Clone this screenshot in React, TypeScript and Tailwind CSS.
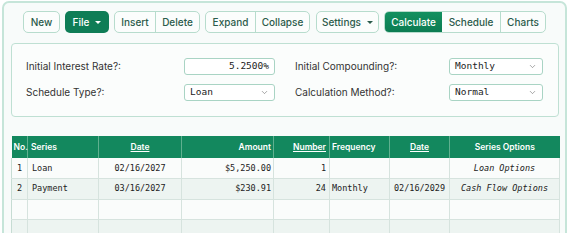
import { ChevronDown } from "lucide-react";

const sans = "font-['Inter','Noto_Sans',sans-serif]";
const mono = "font-['DejaVu_Sans_Mono','Liberation_Mono',monospace]";

const btn =
  "flex items-center justify-center h-full text-[10px] font-medium text-[#2b5b4b]";

function Caret({ light }: { light?: boolean }) {
  return (
    <span
      className={
        light
          ? "ml-[6px] inline-block border-x-[3px] border-x-transparent border-t-[3px] border-t-white"
          : "ml-[6px] inline-block border-x-[3px] border-x-transparent border-t-[3px] border-t-[#2b5b4b]"
      }
    />
  );
}

function Field({ value, right, select }: { value: string; right?: boolean; select?: boolean }) {
  return (
    <div
      className={`flex h-[17px] items-center rounded-[3px] border border-[#a9d4c4] bg-white px-[5px] ${mono} text-[9.5px] text-[#222] ${
        right ? "justify-end" : "justify-between"
      }`}
    >
      <span>{value}</span>
      {select && <ChevronDown className="h-[9px] w-[9px] text-[#666]" strokeWidth={1.5} />}
    </div>
  );
}

const rows = [
  { no: "1", series: "Loan", date: "02/16/2027", amount: "$5,250.00", number: "1", freq: "", date2: "", opt: "Loan Options" },
  { no: "2", series: "Payment", date: "03/16/2027", amount: "$230.91", number: "24", freq: "Monthly", date2: "02/16/2029", opt: "Cash Flow Options" },
  { no: "", series: "", date: "", amount: "", number: "", freq: "", date2: "", opt: "" },
  { no: "", series: "", date: "", amount: "", number: "", freq: "", date2: "", opt: "" },
];

const th = "h-[22px] border-l border-[#5fb08f] px-[2px] text-[8.5px] font-semibold text-white first:border-l-0";
const td = "h-[20.5px] border-l border-b border-[#d6e3de] px-[3px] text-[8.5px] text-[#222] first:border-l-[#c6dcd3]";

export default function App() {
  return (
    <div className={`h-[233px] w-[570px] overflow-hidden bg-white ${sans}`}>
      <div className="ml-[2px] mt-[1px] h-[270px] w-[565px] rounded-[7px] border-2 border-[#c6e5d9] bg-[#f8fbfa] pl-[7px] pt-[8px]">
        {/* Toolbar */}
        <div className="ml-[12px] flex h-[22px] gap-[5px]">
          <div className="h-full w-[37px] rounded-[5px] border border-[#b7dccd] bg-[#fbfdfc]">
            <div className={btn}>New</div>
          </div>
          <div className="h-full w-[44px] rounded-[5px] bg-[#0f7d56]">
            <div className={`${btn} text-white`}>
              File
              <Caret light />
            </div>
          </div>
          <div className="flex h-full overflow-hidden rounded-[5px] border border-[#b7dccd] bg-[#fbfdfc]">
            <div className={`${btn} w-[40px]`}>Insert</div>
            <div className={`${btn} w-[44px] border-l border-[#b7dccd]`}>Delete</div>
          </div>
          <div className="flex h-full overflow-hidden rounded-[5px] border border-[#b7dccd] bg-[#fbfdfc]">
            <div className={`${btn} w-[49px]`}>Expand</div>
            <div className={`${btn} w-[54px] border-l border-[#b7dccd]`}>Collapse</div>
          </div>
          <div className="ml-[1px] h-full w-[63px] rounded-[5px] border border-[#b7dccd] bg-[#fbfdfc]">
            <div className={btn}>
              Settings
              <Caret />
            </div>
          </div>
          <div className="flex h-full overflow-hidden rounded-[5px] border border-[#b7dccd] bg-[#fbfdfc]">
            <div className={`${btn} w-[57px] bg-gradient-to-b from-[#12905f] to-[#0c7c52] text-white`}>Calculate</div>
            <div className={`${btn} w-[58px]`}>Schedule</div>
            <div className={`${btn} w-[45px] border-l border-[#b7dccd]`}>Charts</div>
          </div>
        </div>

        {/* Settings panel */}
        <div className="mt-[10px] flex h-[74px] w-[548px] flex-col gap-[9px] rounded-[4px] border border-[#bfe0d3] bg-[#fbfdfc] pl-[14px] pt-[14px] text-[10px] text-[#333]">
          <div className="flex items-center">
            <div className="w-[158px]">Initial Interest Rate?:</div>
            <div className="w-[91px]">
              <Field value="5.2500%" right />
            </div>
            <div className="ml-[20px] w-[154px]">Initial Compounding?:</div>
            <div className="w-[94px]">
              <Field value="Monthly" select />
            </div>
          </div>
          <div className="flex items-center">
            <div className="w-[158px]">Schedule Type?:</div>
            <div className="w-[91px]">
              <Field value="Loan" select />
            </div>
            <div className="ml-[20px] w-[154px]">Calculation Method?:</div>
            <div className="w-[94px]">
              <Field value="Normal" select />
            </div>
          </div>
        </div>

        {/* Series table */}
        <table className="mt-[19px] w-[548px] table-fixed border-collapse">
          <thead>
            <tr className="bg-[#13885e]">
              <th className={`${th} w-[16px] text-left`}>No.</th>
              <th className={`${th} w-[71px] pl-[3px] text-left`}>Series</th>
              <th className={`${th} w-[83px] text-center underline`}>Date</th>
              <th className={`${th} w-[92px] text-right`}>Amount</th>
              <th className={`${th} w-[56px] pr-[3px] text-right underline`}>Number</th>
              <th className={`${th} w-[60px] text-left`}>Frequency</th>
              <th className={`${th} w-[60px] text-center underline`}>Date</th>
              <th className={`${th} w-[110px] text-center`}>Series Options</th>
            </tr>
          </thead>
          <tbody className={mono}>
            {rows.map((r, i) => (
              <tr key={i} className={i % 2 === 0 ? "bg-[#fafcfb]" : "bg-[#edf4f1]"}>
                <td className={`${td} text-center`}>{r.no}</td>
                <td className={`${td} pl-[4px] text-left`}>{r.series}</td>
                <td className={`${td} text-center`}>{r.date}</td>
                <td className={`${td} pr-[2px] text-right`}>{r.amount}</td>
                <td className={`${td} pr-[3px] text-right`}>{r.number}</td>
                <td className={`${td} pl-[2px] text-left`}>{r.freq}</td>
                <td className={`${td} text-center`}>{r.date2}</td>
                <td className={`${td} border-r text-center italic`}>{r.opt}</td>
              </tr>
            ))}
          </tbody>
        </table>
      </div>
    </div>
  );
}
